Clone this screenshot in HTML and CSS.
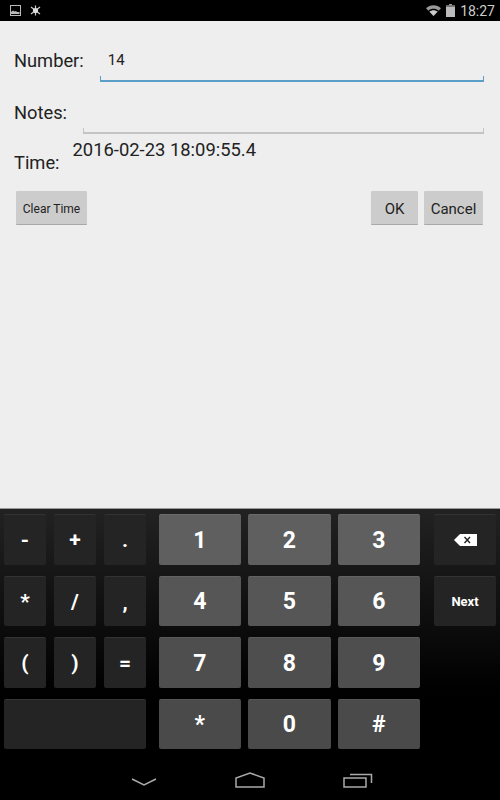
FILE: index.html
```html
<!DOCTYPE html>
<html lang="en">

<head>
  <meta charset="UTF-8">
  <meta name="viewport" content="width=device-width, initial-scale=1.0">
  <title>Number entry</title>
  <link rel="stylesheet" href="styles.css">
</head>

<body>
  <div class="status-bar">
    <div class="status-left">
      <svg width="11" height="11" viewBox="0 0 11 11">
        <rect x="0.5" y="0.5" width="10" height="10" fill="none" stroke="#bbb"/>
        <path d="M1 9V7l2-1.500 1.500 1 1.500-.5 1 1 2.500 0v2z" fill="#bbb"/>
      </svg>
      <svg width="11" height="11" viewBox="0 0 11 11">
        <path d="M5.500 0.500v10M1 2l9 7M10 2l-9 7" stroke="#ccc" stroke-width="1.200"/>
        <circle cx="5.500" cy="5.500" r="2.600" fill="#ddd"/>
      </svg>
    </div>
    <div class="status-right">
      <svg width="15" height="11" viewBox="0 0 15 11">
        <path d="M0 3.200C4-.8 11-.8 15 3.200L7.500 11z" fill="#999"/>
        <path d="M2.400 5.600c3-2.500 7.200-2.500 10.200 0L7.500 11z" fill="#000"/>
        <path d="M3.500 6.800c2.400-2 5.600-2 8 0L7.500 11z" fill="#ccc"/>
      </svg>
      <svg width="9" height="13" viewBox="0 0 9 13">
        <path d="M3 0h3v1.500H3z" fill="#999"/>
        <path d="M0 1.500h9V13H0z" fill="#bbb"/>
        <path d="M0 1.500h9V3H0z" fill="#777"/>
      </svg>
      <span class="clock">18:27</span>
    </div>
  </div>

  <div class="content">
    <div class="field-row number-row">
      <label class="field-label">Number:</label>
      <div class="text-field active">14</div>
    </div>
    <div class="field-row notes-row">
      <label class="field-label">Notes:</label>
      <div class="text-field"></div>
    </div>
    <div class="time-row">
      <label class="field-label">Time:</label>
      <span class="time-value">2016-02-23 18:09:55.4</span>
    </div>
    <div class="button-row">
      <button class="btn btn-small">Clear Time</button>
      <div class="button-group">
        <button class="btn btn-ok">OK</button>
        <button class="btn btn-cancel">Cancel</button>
      </div>
    </div>
  </div>

  <div class="keyboard">
    <div class="sym-keys">
      <div class="key">-</div>
      <div class="key">+</div>
      <div class="key">.</div>
      <div class="key">*</div>
      <div class="key">/</div>
      <div class="key">,</div>
      <div class="key">(</div>
      <div class="key">)</div>
      <div class="key">=</div>
      <div class="key key-wide"></div>
    </div>
    <div class="num-keys">
      <div class="key num row-1">1</div>
      <div class="key num row-1">2</div>
      <div class="key num row-1">3</div>
      <div class="key num row-2">4</div>
      <div class="key num row-2">5</div>
      <div class="key num row-2">6</div>
      <div class="key num row-3">7</div>
      <div class="key num row-3">8</div>
      <div class="key num row-3">9</div>
      <div class="key num row-4">*</div>
      <div class="key num row-4">0</div>
      <div class="key num row-4">#</div>
    </div>
    <div class="action-keys">
      <div class="key">
        <svg width="23" height="12" viewBox="0 0 23 12">
          <path d="M6 0h17v12H6L0 6z" fill="#fff"/>
          <path d="M10.500 3l5.500 6M16 3l-5.500 6" stroke="#222" stroke-width="1.400"/>
        </svg>
      </div>
      <div class="key key-next">Next</div>
    </div>
  </div>

  <div class="nav-bar">
    <svg class="nav-back" width="26" height="10" viewBox="0 0 26 10">
      <path d="M1 1l12 6 12-6" fill="none" stroke="#aaa" stroke-width="1.500"/>
    </svg>
    <svg class="nav-home" width="30" height="16" viewBox="0 0 30 16">
      <path d="M1 15V6l14-5 14 5v9z" fill="none" stroke="#aaa" stroke-width="1.500"/>
    </svg>
    <svg class="nav-recent" width="30" height="16" viewBox="0 0 30 16">
      <path d="M1 6h22v9H1z" fill="none" stroke="#aaa" stroke-width="1.500"/>
      <path d="M7 2.500h21.500V11" fill="none" stroke="#aaa" stroke-width="1.500"/>
    </svg>
  </div>
</body>

</html>
```

FILE: styles.css
```css
* {
  box-sizing: border-box;
}

body {
  font-family: Roboto, "Liberation Sans", sans-serif;
  background-color: #000;
  width: 500px;
  height: 800px;
  margin: 0;
  display: flex;
  flex-direction: column;
  overflow: hidden;
}

.status-bar {
  height: 21px;
  background-color: #000;
  display: flex;
  justify-content: space-between;
  align-items: center;
  padding: 0 5px 0 10px;
}

.status-left {
  display: flex;
  gap: 9px;
}

.status-right {
  display: flex;
  align-items: center;
  gap: 5px;
}

.clock {
  color: #ccc;
  font-size: 14px;
}

.content {
  height: 487px;
  background-color: #eee;
  padding-left: 14px;
  padding-right: 16px;
  color: #222;
}

.field-row {
  display: flex;
  align-items: flex-start;
}

.number-row {
  height: 61px;
  padding-top: 29px;
}

.notes-row {
  height: 52px;
  padding-top: 20px;
}

.field-label {
  font-size: 18.3px;
  line-height: 21px;
}

.text-field {
  flex: 1;
  position: relative;
  font-size: 15px;
  line-height: 20px;
  padding-left: 8px;
  border-bottom: 2px solid #c4c4c4;
}

.number-row .text-field {
  margin-left: 16px;
  margin-top: -1px;
  height: 33px;
  padding-top: 1px;
  border-bottom-color: #5b9fc9;
}

.notes-row .text-field {
  margin-left: 16px;
  margin-top: -1px;
  height: 33px;
}

.text-field::before,
.text-field::after {
  content: '';
  position: absolute;
  bottom: 0;
  width: 1px;
  height: 4px;
  background-color: #c4c4c4;
}

.text-field::before {
  left: 0;
}

.text-field::after {
  right: 0;
}

.text-field.active::before,
.text-field.active::after {
  background-color: #5b9fc9;
}

.time-row {
  display: flex;
  align-items: flex-start;
  height: 57px;
}

.time-row .field-label {
  margin-top: 18px;
}

.time-value {
  font-size: 18.4px;
  line-height: 21px;
  margin-left: 13px;
  margin-top: 5px;
}

.button-row {
  display: flex;
  justify-content: space-between;
  padding-left: 2px;
  padding-right: 1px;
}

.button-group {
  display: flex;
  gap: 6px;
}

.btn {
  font-family: inherit;
  height: 34px;
  background-color: #ccc;
  color: #222;
  border: none;
  border-bottom: 1px solid #a8a8a8;
  border-radius: 1px;
  padding: 2px 0 0;
  font-size: 15px;
}

.btn-small {
  width: 71px;
  font-size: 12px;
}

.btn-ok {
  width: 47px;
}

.btn-cancel {
  width: 59px;
}

.keyboard {
  height: 256px;
  background: linear-gradient(#222, #000 72%);
  border-top: 1px solid #999;
  display: flex;
  padding: 5px 0 0 4px;
}

.sym-keys,
.num-keys,
.action-keys {
  display: grid;
  grid-auto-rows: 50.5px;
  row-gap: 11px;
}

.sym-keys {
  grid-template-columns: repeat(3, 42px);
  column-gap: 8px;
  margin-right: 12.5px;
}

.num-keys {
  grid-template-columns: repeat(3, 82.5px);
  column-gap: 7px;
  margin-right: 14px;
}

.action-keys {
  grid-template-columns: 62px;
  align-content: start;
}

.key {
  background-color: #242424;
  border-top: 1px solid #333;
  border-radius: 2px;
  color: #fff;
  font-weight: bold;
  font-size: 21px;
  padding-top: 1px;
  display: flex;
  align-items: center;
  justify-content: center;
}

.key-wide {
  grid-column: span 3;
}

.key-next {
  font-size: 13px;
}

.num {
  font-size: 23px;
}

.row-1 {
  background-color: #5f5f5f;
  border-top-color: #6c6c6c;
}

.row-2 {
  background-color: #565656;
  border-top-color: #636363;
}

.row-3 {
  background-color: #4e4e4e;
  border-top-color: #5a5a5a;
}

.row-4 {
  background-color: #4a4a4a;
  border-top-color: #565656;
}

.nav-bar {
  flex: 1;
  position: relative;
  background-color: #000;
}

.nav-bar svg {
  position: absolute;
}

.nav-back {
  left: 131px;
  top: 14px;
}

.nav-home {
  left: 235px;
  top: 8px;
}

.nav-recent {
  left: 343px;
  top: 8px;
}
```
